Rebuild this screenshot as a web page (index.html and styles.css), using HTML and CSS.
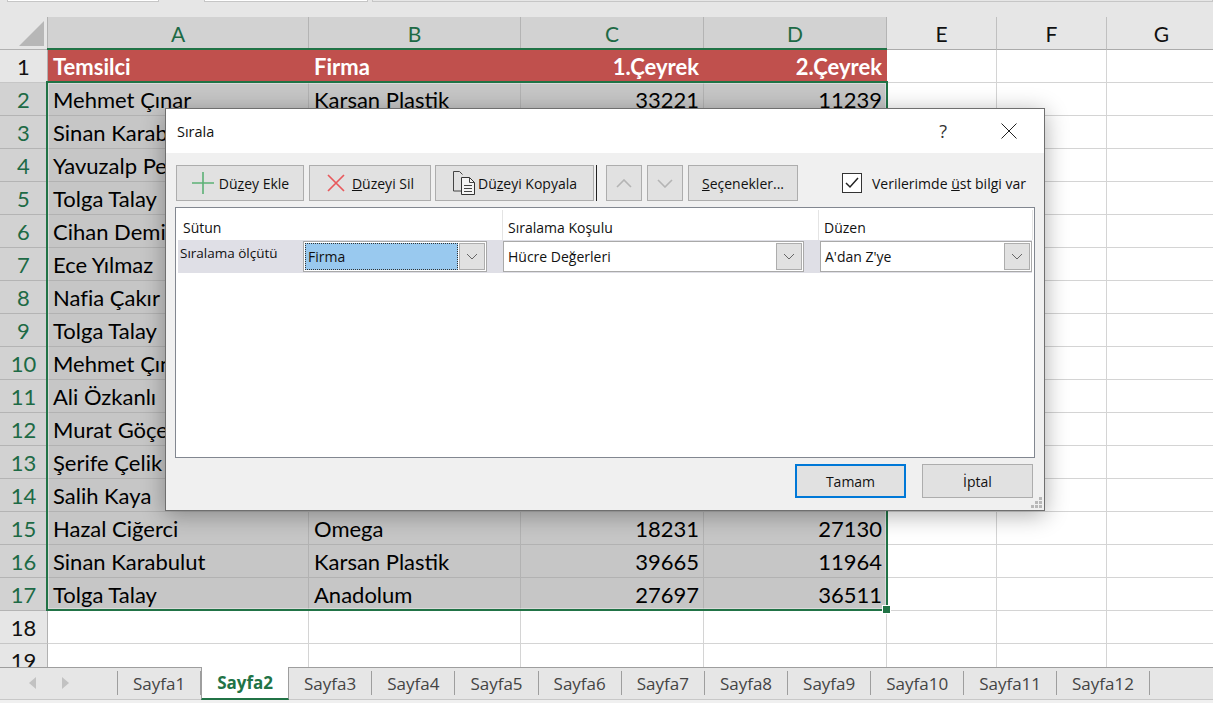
FILE: index.html
```html
<!DOCTYPE html>
<html lang="tr">
<head>
    <meta charset="UTF-8">
    <title>Sırala</title>
    <link rel="stylesheet" href="styles.css">
</head>
<body>
    <div class="app">
        <div class="top-strip">
            <span class="strip-tab strip-a"></span>
            <span class="strip-tab strip-b"></span>
            <span class="strip-tab strip-c"></span>
        </div>

        <div class="sheet">
            <div class="row row-head">
                <div class="corner"><span class="corner-mark"></span></div>
                <div class="col-head on">A</div>
                <div class="col-head on">B</div>
                <div class="col-head on">C</div>
                <div class="col-head on">D</div>
                <div class="col-head">E</div>
                <div class="col-head">F</div>
                <div class="col-head">G</div>
            </div>

            <div class="row">
                <div class="row-num">1</div>
                <div class="cell title">Temsilci</div>
                <div class="cell title">Firma</div>
                <div class="cell title num">1.Çeyrek</div>
                <div class="cell title num">2.Çeyrek</div>
                <div class="cell"></div><div class="cell"></div><div class="cell"></div>
            </div>
            <div class="row">
                <div class="row-num on">2</div>
                <div class="cell sel">Mehmet Çınar</div>
                <div class="cell sel">Karsan Plastik</div>
                <div class="cell sel num">33221</div>
                <div class="cell sel num">11239</div>
                <div class="cell"></div><div class="cell"></div><div class="cell"></div>
            </div>
            <div class="row">
                <div class="row-num on">3</div>
                <div class="cell sel">Sinan Karabulut</div>
                <div class="cell sel"></div><div class="cell sel"></div><div class="cell sel"></div>
                <div class="cell"></div><div class="cell"></div><div class="cell"></div>
            </div>
            <div class="row">
                <div class="row-num on">4</div>
                <div class="cell sel">Yavuzalp Pe</div>
                <div class="cell sel"></div><div class="cell sel"></div><div class="cell sel"></div>
                <div class="cell"></div><div class="cell"></div><div class="cell"></div>
            </div>
            <div class="row">
                <div class="row-num on">5</div>
                <div class="cell sel">Tolga Talay</div>
                <div class="cell sel"></div><div class="cell sel"></div><div class="cell sel"></div>
                <div class="cell"></div><div class="cell"></div><div class="cell"></div>
            </div>
            <div class="row">
                <div class="row-num on">6</div>
                <div class="cell sel">Cihan Demi</div>
                <div class="cell sel"></div><div class="cell sel"></div><div class="cell sel"></div>
                <div class="cell"></div><div class="cell"></div><div class="cell"></div>
            </div>
            <div class="row">
                <div class="row-num on">7</div>
                <div class="cell sel">Ece Yılmaz</div>
                <div class="cell sel"></div><div class="cell sel"></div><div class="cell sel"></div>
                <div class="cell"></div><div class="cell"></div><div class="cell"></div>
            </div>
            <div class="row">
                <div class="row-num on">8</div>
                <div class="cell sel">Nafia Çakır</div>
                <div class="cell sel"></div><div class="cell sel"></div><div class="cell sel"></div>
                <div class="cell"></div><div class="cell"></div><div class="cell"></div>
            </div>
            <div class="row">
                <div class="row-num on">9</div>
                <div class="cell sel">Tolga Talay</div>
                <div class="cell sel"></div><div class="cell sel"></div><div class="cell sel"></div>
                <div class="cell"></div><div class="cell"></div><div class="cell"></div>
            </div>
            <div class="row">
                <div class="row-num on">10</div>
                <div class="cell sel">Mehmet Çınar</div>
                <div class="cell sel"></div><div class="cell sel"></div><div class="cell sel"></div>
                <div class="cell"></div><div class="cell"></div><div class="cell"></div>
            </div>
            <div class="row">
                <div class="row-num on">11</div>
                <div class="cell sel">Ali Özkanlı</div>
                <div class="cell sel"></div><div class="cell sel"></div><div class="cell sel"></div>
                <div class="cell"></div><div class="cell"></div><div class="cell"></div>
            </div>
            <div class="row">
                <div class="row-num on">12</div>
                <div class="cell sel">Murat Göçe</div>
                <div class="cell sel"></div><div class="cell sel"></div><div class="cell sel"></div>
                <div class="cell"></div><div class="cell"></div><div class="cell"></div>
            </div>
            <div class="row">
                <div class="row-num on">13</div>
                <div class="cell sel">Şerife Çelik</div>
                <div class="cell sel"></div><div class="cell sel"></div><div class="cell sel"></div>
                <div class="cell"></div><div class="cell"></div><div class="cell"></div>
            </div>
            <div class="row">
                <div class="row-num on">14</div>
                <div class="cell sel">Salih Kaya</div>
                <div class="cell sel"></div><div class="cell sel"></div><div class="cell sel"></div>
                <div class="cell"></div><div class="cell"></div><div class="cell"></div>
            </div>
            <div class="row">
                <div class="row-num on">15</div>
                <div class="cell sel">Hazal Ciğerci</div>
                <div class="cell sel">Omega</div>
                <div class="cell sel num">18231</div>
                <div class="cell sel num">27130</div>
                <div class="cell"></div><div class="cell"></div><div class="cell"></div>
            </div>
            <div class="row">
                <div class="row-num on">16</div>
                <div class="cell sel">Sinan Karabulut</div>
                <div class="cell sel">Karsan Plastik</div>
                <div class="cell sel num">39665</div>
                <div class="cell sel num">11964</div>
                <div class="cell"></div><div class="cell"></div><div class="cell"></div>
            </div>
            <div class="row">
                <div class="row-num on">17</div>
                <div class="cell sel">Tolga Talay</div>
                <div class="cell sel">Anadolum</div>
                <div class="cell sel num">27697</div>
                <div class="cell sel num">36511</div>
                <div class="cell"></div><div class="cell"></div><div class="cell"></div>
            </div>
            <div class="row">
                <div class="row-num">18</div>
                <div class="cell"></div><div class="cell"></div><div class="cell"></div><div class="cell"></div>
                <div class="cell"></div><div class="cell"></div><div class="cell"></div>
            </div>
            <div class="row">
                <div class="row-num">19</div>
                <div class="cell"></div><div class="cell"></div><div class="cell"></div><div class="cell"></div>
                <div class="cell"></div><div class="cell"></div><div class="cell"></div>
            </div>

            <div class="title-edge"></div>
            <div class="selection"><span class="fill-handle"></span></div>
        </div>

        <div class="tabs">
            <div class="tab-nav">
                <svg class="nav-arrow" width="8" height="12" viewBox="0 0 8 12"><path d="M7 0v12L0 6z"/></svg>
                <svg class="nav-arrow" width="8" height="12" viewBox="0 0 8 12"><path d="M1 0v12l7-6z"/></svg>
            </div>
            <div class="tab">Sayfa1</div>
            <div class="tab active">Sayfa2</div>
            <div class="tab after-active">Sayfa3</div>
            <div class="tab">Sayfa4</div>
            <div class="tab">Sayfa5</div>
            <div class="tab">Sayfa6</div>
            <div class="tab">Sayfa7</div>
            <div class="tab">Sayfa8</div>
            <div class="tab">Sayfa9</div>
            <div class="tab">Sayfa10</div>
            <div class="tab">Sayfa11</div>
            <div class="tab">Sayfa12</div>
        </div>
        <div class="status-edge"></div>
    </div>

    <div class="dialog">
        <div class="dialog-title">
            <span class="dialog-name">Sırala</span>
            <span class="help">?</span>
            <svg class="close" width="16" height="16" viewBox="0 0 16 16"><path d="M.5.5l15 15M15.500.5l-15 15" stroke="#222" fill="none"/></svg>
        </div>

        <div class="dialog-body">
            <div class="toolbar">
                <button class="btn btn-add">
                    <svg width="24" height="24" viewBox="0 0 24 24"><path d="M12 1v22M1 12h22" stroke="#5cb176" stroke-width="1.6" fill="none"/></svg>
                    <span>Dü<u>z</u>ey Ekle</span>
                </button>
                <button class="btn btn-del">
                    <svg width="20" height="20" viewBox="0 0 20 20"><path d="M2 2l16 16M18 2L2 18" stroke="#e8595c" stroke-width="1.7" fill="none"/></svg>
                    <span><u>D</u>üzeyi Sil</span>
                </button>
                <button class="btn btn-copy">
                    <svg width="24" height="26" viewBox="0 0 24 26">
                        <path d="M11 21H1.500V1.500h6l3 3" stroke="#444" fill="none"/>
                        <path d="M9.500 7.500h8l5 5v12h-13z" stroke="#333" fill="#f4f4f4"/>
                        <path d="M17.500 7.500v5h5M12 15.500h8M12 18.500h8M12 21.500h8" stroke="#444" fill="none"/>
                    </svg>
                    <span>Dü<u>z</u>eyi Kopyala</span>
                </button>
                <span class="tool-sep"></span>
                <button class="btn btn-arrow" disabled>
                    <svg width="16" height="9" viewBox="0 0 16 9"><path d="M1 8l7-7 7 7" stroke="#b4b4b4" stroke-width="1.6" fill="none"/></svg>
                </button>
                <button class="btn btn-arrow" disabled>
                    <svg width="16" height="9" viewBox="0 0 16 9"><path d="M1 1l7 7 7-7" stroke="#b4b4b4" stroke-width="1.6" fill="none"/></svg>
                </button>
                <button class="btn btn-options"><span><u>S</u>eçenekler...</span></button>
                <label class="header-check">
                    <span class="checkbox">
                        <svg width="14" height="12" viewBox="0 0 14 12"><path d="M1 6l4 4 8-9" stroke="#222" stroke-width="1.5" fill="none"/></svg>
                    </span>
                    <span>Verilerimde <u>ü</u>st bilgi var</span>
                </label>
            </div>

            <div class="level-list">
                <div class="level-head">
                    <div class="head-col col-sort">Sütun</div>
                    <div class="head-col col-on">Sıralama Koşulu</div>
                    <div class="head-col col-order">Düzen</div>
                </div>
                <div class="level-row">
                    <div class="level-label">Sıralama ölçütü</div>
                    <div class="combo combo-field">
                        <span class="combo-text selected">Firma</span>
                        <span class="combo-btn"><svg width="12" height="7" viewBox="0 0 12 7"><path d="M1 1l5 5 5-5" stroke="#666" fill="none"/></svg></span>
                    </div>
                    <div class="combo combo-on">
                        <span class="combo-text">Hücre Değerleri</span>
                        <span class="combo-btn"><svg width="12" height="7" viewBox="0 0 12 7"><path d="M1 1l5 5 5-5" stroke="#666" fill="none"/></svg></span>
                    </div>
                    <div class="combo combo-order">
                        <span class="combo-text">A'dan Z'ye</span>
                        <span class="combo-btn"><svg width="12" height="7" viewBox="0 0 12 7"><path d="M1 1l5 5 5-5" stroke="#666" fill="none"/></svg></span>
                    </div>
                </div>
            </div>

            <div class="dialog-foot">
                <button class="btn btn-main primary">Tamam</button>
                <button class="btn btn-main">İptal</button>
            </div>
            <svg class="grip" width="12" height="12" viewBox="0 0 12 12">
                <path d="M8 0h3v3H8zM4 4h3v3H4zM8 4h3v3H8zM0 8h3v3H0zM4 8h3v3H4zM8 8h3v3H8z" fill="#b8b8b8"/>
            </svg>
        </div>
    </div>
</body>
</html>
```

FILE: styles.css
```css
* {
    box-sizing: border-box;
}

html, body {
    margin: 0;
    height: 100%;
    overflow: hidden;
}

body {
    background: #fff;
    color: #000;
    font-family: "Lato", "Liberation Sans", sans-serif;
}

.app {
    display: flex;
    flex-direction: column;
    height: 703px;
}

/* strip above the sheet */
.top-strip {
    height: 17px;
    background: #e6e6e6;
    position: relative;
    flex: none;
}

.strip-tab {
    position: absolute;
    top: 0;
    height: 2px;
    background: #fff;
    border: 1px solid #c6c6c6;
    border-top: none;
}

.strip-a { left: 7px; width: 152px; }
.strip-b { left: 204px; width: 164px; }
.strip-c { left: 372px; width: 841px; background: #e6e6e6; }

/* sheet */
.sheet {
    height: 650px;
    flex: none;
    overflow: hidden;
    position: relative;
}

.row {
    display: grid;
    grid-template-columns: 48px 261px 212px 183px 183px 110px 110px 110px;
    height: 33px;
}

.corner {
    background: #e6e6e6;
    border-right: 1px solid #b1b1b1;
    border-bottom: 1px solid #b1b1b1;
    display: flex;
    align-items: flex-end;
    justify-content: flex-end;
    padding: 0 3px 3px 0;
}

.corner-mark {
    width: 0;
    height: 0;
    border-left: 25px solid transparent;
    border-bottom: 25px solid #b7b7b7;
}

.col-head {
    background: #e6e6e6;
    border-right: 1px solid #c0c0c0;
    border-bottom: 1px solid #ababab;
    display: flex;
    align-items: center;
    justify-content: center;
    font-size: 21px;
    color: #111;
}

.col-head.on {
    background: #d2d2d2;
    color: #1d6a45;
    border-right-color: #b4b4b4;
}

.row-num {
    background: #e6e6e6;
    border-right: 1px solid #b1b1b1;
    border-bottom: 1px solid #c6c6c6;
    display: flex;
    align-items: center;
    justify-content: center;
    font-size: 22px;
    color: #111;
}

.row-num.on {
    background: #d2d2d2;
    color: #1d6a45;
    border-bottom-color: #b4b4b4;
}

.cell {
    border-right: 1px solid #d4d4d4;
    border-bottom: 1px solid #d4d4d4;
    padding: 0 4px 0 5px;
    display: flex;
    align-items: center;
    font-size: 22px;
    white-space: nowrap;
    overflow: hidden;
    letter-spacing: 0;
}

.cell.num {
    justify-content: flex-end;
}

.cell.title {
    background: #c0504d;
    color: #fff;
    font-weight: 700;
    border-right-color: #c0504d;
    border-bottom-color: #c0504d;
}

.cell.sel {
    background: #c6c6c6;
    border-right-color: #b2b2b2;
    border-bottom-color: #b2b2b2;
}

.title-edge {
    position: absolute;
    left: 47px;
    top: 31px;
    width: 840px;
    height: 2px;
    background: #217346;
}

.selection {
    position: absolute;
    left: 46px;
    top: 64px;
    width: 842px;
    height: 530px;
    border: 2px solid #217346;
    box-shadow: inset 0 0 0 1px rgba(255, 255, 255, 0.35);
}

.fill-handle {
    position: absolute;
    right: -4px;
    bottom: -4px;
    width: 7px;
    height: 7px;
    background: #217346;
    outline: 1px solid #fff;
}

/* sheet tabs */
.tabs {
    height: 33px;
    flex: none;
    background: #e6e6e6;
    border-top: 1px solid #9e9e9e;
    border-bottom: 1px solid #c8c8c8;
    display: flex;
    font-family: "Open Sans", "Liberation Sans", sans-serif;
    font-size: 17px;
    color: #444;
}

.tab-nav {
    width: 118px;
    flex: none;
    display: flex;
    align-items: center;
    gap: 24px;
    padding-left: 29px;
    border-right: 1px solid #9e9e9e;
    margin: 3px 0 4px;
}

.nav-arrow path {
    fill: #c2c2c2;
}

.tab {
    padding: 0 15px;
    display: flex;
    align-items: center;
    white-space: nowrap;
    border-right: 1px solid #9e9e9e;
    margin: 3px 0 4px;
}

.tab.active {
    margin: -1px 0 -1px;
    background: #fff;
    color: #217346;
    font-weight: 700;
    border-left: 1px solid #9e9e9e;
    border-right: 1px solid #9e9e9e;
    border-bottom: 2px solid #217346;
}

.status-edge {
    flex: 1;
    background: #f0f0f0;
}

/* sort dialog */
.dialog {
    position: absolute;
    left: 165px;
    top: 108px;
    width: 880px;
    height: 403px;
    background: #f0f0f0;
    border: 1px solid #6f6f6f;
    box-shadow: 0 4px 22px rgba(0, 0, 0, 0.32);
    display: flex;
    flex-direction: column;
    font-family: "Open Sans", "Liberation Sans", sans-serif;
    font-size: 14px;
    color: #111;
}

.dialog-title {
    height: 44px;
    flex: none;
    background: #fff;
    display: flex;
    align-items: center;
    padding: 0 27px 0 11px;
}

.dialog-name {
    font-size: 14.500px;
    flex: 1;
}

.help {
    font-size: 18px;
    margin-right: 54px;
    color: #333;
}

.dialog-body {
    flex: 1;
    padding: 12px 9px 0 9px;
    display: flex;
    flex-direction: column;
    position: relative;
}

.toolbar {
    display: flex;
    align-items: stretch;
    height: 36px;
    flex: none;
}

.btn {
    background: #e1e1e1;
    border: 1px solid #adadad;
    font-family: inherit;
    font-size: 14px;
    color: #111;
    padding: 0;
    display: flex;
    align-items: center;
    justify-content: center;
    gap: 4px;
}

.btn-add { width: 128px; margin-left: 1px; }
.btn-del { width: 122px; margin-left: 5px; gap: 6px; }
.btn-copy { width: 159px; margin-left: 4px; gap: 2px; }
.btn-options { width: 110px; margin-left: 5px; }

.btn-arrow {
    width: 36px;
    margin-left: 5px;
}

.btn-arrow:first-of-type {
    margin-left: 0;
}

.tool-sep {
    width: 1px;
    background: #222;
    margin: 0 4px 0 2px;
}

.header-check {
    display: flex;
    align-items: center;
    gap: 10px;
    margin-left: 44px;
    white-space: nowrap;
}

.checkbox {
    width: 20px;
    height: 20px;
    border: 1px solid #333;
    background: #fff;
    display: flex;
    align-items: center;
    justify-content: center;
}

.level-list {
    height: 251px;
    flex: none;
    margin: 6px 0 0 0;
    width: 860px;
    background: #fff;
    border: 1px solid #828790;
    padding: 2px;
}

.level-head {
    display: grid;
    grid-template-columns: 325px 316px 214px;
    height: 30px;
}

.head-col {
    display: flex;
    align-items: center;
    padding: 4px 0 0 5px;
    border-right: 1px solid #e4e4e4;
}

.level-row {
    display: flex;
    align-items: center;
    height: 33px;
    background: #dfdfe6;
    padding-left: 0;
}

.level-label {
    width: 125px;
    padding: 0 0 8px 2px;
    white-space: nowrap;
    font-size: 13.500px;
}

.combo {
    height: 31px;
    background: #fff;
    border: 1px solid #a9a9a9;
    display: flex;
    align-items: stretch;
    padding: 1px;
}

.combo-field { width: 184px; }
.combo-on { width: 301px; margin-left: 16px; }
.combo-order { width: 212px; margin-left: 16px; }

.combo-text {
    flex: 1;
    display: flex;
    align-items: center;
    padding-left: 3px;
    white-space: nowrap;
}

.combo-text.selected {
    background: #99c9ef;
    outline: 1px dotted #333;
    outline-offset: -1px;
}

.combo-btn {
    width: 26px;
    flex: none;
    background: #e1e1e1;
    border: 1px solid #adadad;
    margin-left: 1px;
    display: flex;
    align-items: center;
    justify-content: center;
}

.dialog-foot {
    display: flex;
    gap: 16px;
    margin: 6px 0 0 620px;
}

.btn-main {
    width: 111px;
    height: 34px;
}

.btn-main.primary {
    border: 2px solid #0078d7;
}

.grip {
    position: absolute;
    right: 1px;
    bottom: 1px;
}
```
